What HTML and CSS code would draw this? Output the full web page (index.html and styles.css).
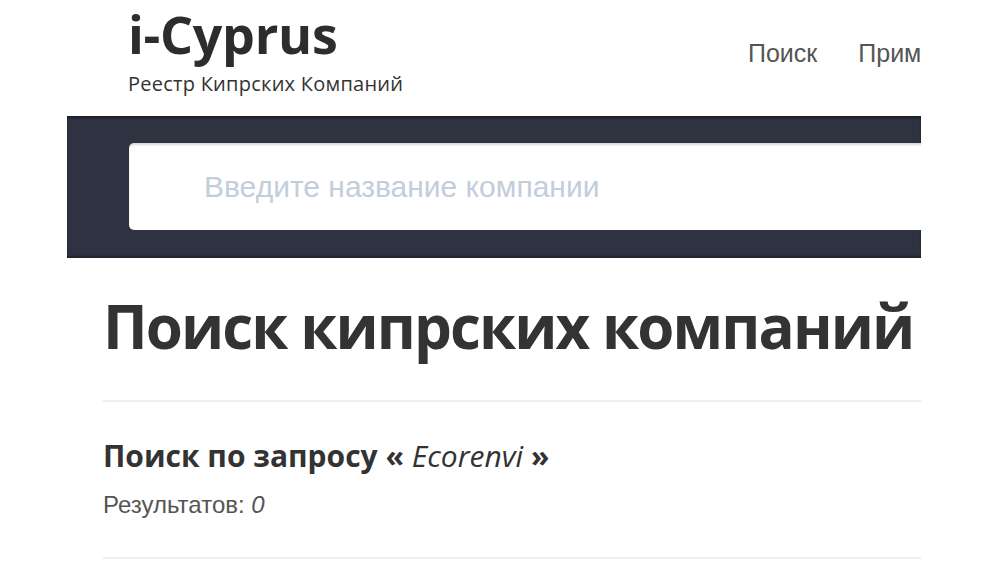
FILE: index.html
```html
<!DOCTYPE html>
<html lang="ru">
<head>
<meta charset="utf-8">
<title>i-Cyprus</title>
<link rel="stylesheet" href="styles.css">
</head>
<body>
<div class="page">
  <header class="site-header">
    <div class="brand">
      <div class="logo">i-Cyprus</div>
      <div class="tagline">Реестр Кипрских Компаний</div>
    </div>
    <nav class="nav">
      <a class="nav-link" href="#">Поиск</a>
      <a class="nav-link" href="#">Примеры</a>
    </nav>
  </header>
  <section class="search-band">
    <div class="search-box">
      <input class="search-input" type="text" placeholder="Введите название компании">
    </div>
  </section>
  <main class="content">
    <h1 class="title">Поиск кипрских компаний</h1>
    <hr class="rule">
    <h2 class="query">Поиск по запросу « <em>Ecorenvi</em> »</h2>
    <p class="count">Результатов: <em>0</em></p>
    <hr class="rule">
  </main>
</div>
</body>
</html>
```
FILE: styles.css
```css
html, body {
  margin: 0;
  padding: 0;
  background: #ffffff;
}
body {
  font-family: "Liberation Sans", Arial, sans-serif;
  color: #333;
}
.page {
  width: 854px;
  margin-left: 67px;
  overflow: hidden;
  height: 570px;
}
.site-header {
  display: flex;
  align-items: flex-start;
  height: 116px;
  padding-left: 61px;
  box-sizing: border-box;
}
.brand {
  padding-top: 2px;
  width: 620px;
  flex-shrink: 0;
}
.logo {
  font-family: "Open Sans", sans-serif;
  font-weight: 700;
  font-size: 52px;
  line-height: 64px;
  color: #2d2d2d;
  letter-spacing: -0.3px;
}
.tagline {
  font-family: "Open Sans", sans-serif;
  font-size: 20px;
  line-height: 24px;
  margin-top: 6px;
  letter-spacing: 0.25px;
  color: #333;
}
.nav {
  display: flex;
  gap: 41px;
  padding-top: 39px;
  white-space: nowrap;
}
.nav-link {
  font-size: 25px;
  color: #555;
  text-decoration: none;
}
.search-band {
  background: #2e3241;
  height: 142px;
  padding: 27px 0 0 62px;
  box-sizing: border-box;
  box-shadow: inset 0 2px 2px rgba(0,0,0,0.35), inset 0 -2px 2px rgba(0,0,0,0.3);
}
.search-box {
  width: 1000px;
  height: 87px;
  background: #fff;
  border-radius: 5px;
  box-shadow: inset 0 2px 2px rgba(0,0,0,0.15);
  display: flex;
  align-items: center;
}
.search-input {
  border: none;
  outline: none;
  background: transparent;
  width: 100%;
  padding: 0 0 0 75px;
  font-family: "Liberation Sans", Arial, sans-serif;
  font-size: 30px;
  color: #333;
}
.search-input::placeholder {
  color: #c3cddb;
}
.content {
  padding-left: 36px;
}
.title {
  font-family: "Open Sans", sans-serif;
  font-weight: 700;
  font-size: 60px;
  line-height: 80px;
  letter-spacing: -1.9px;
  margin: 28px 0 0;
  color: #333;
  white-space: nowrap;
}
.rule {
  border: none;
  border-top: 2px solid #eeeeee;
  margin: 34px 0 0;
  width: 900px;
}
.query {
  font-family: "Open Sans", sans-serif;
  font-weight: 700;
  font-size: 30px;
  line-height: 36px;
  margin: 36px 0 0;
  color: #333;
}
.query em {
  font-weight: 400;
}
.count {
  font-size: 24px;
  color: #555;
  margin: 17px 0 0;
  line-height: 28px;
}
.count + .rule {
  margin-top: 38px;
}
```
